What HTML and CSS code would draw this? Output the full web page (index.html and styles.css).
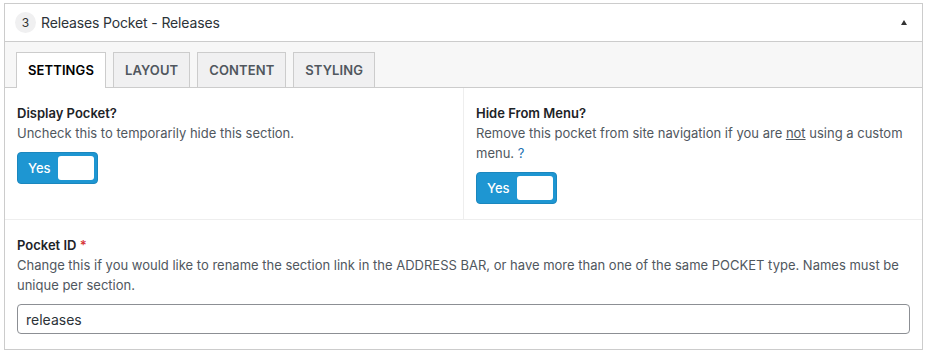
FILE: index.html
```html
<!DOCTYPE html>
<html lang="en">
<head>
    <meta charset="UTF-8">
    <meta name="viewport" content="width=device-width, initial-scale=1.0">
    <title>Releases Pocket</title>
    <link rel="stylesheet" href="styles.css">
</head>
<body>
    <div class="pocket">
        <div class="pocket-head">
            <span class="num">3</span>
            <span class="title">Releases Pocket - Releases</span>
            <span class="arrow"></span>
        </div>

        <div class="tabs">
            <div class="tab active">SETTINGS</div>
            <div class="tab">LAYOUT</div>
            <div class="tab">CONTENT</div>
            <div class="tab">STYLING</div>
        </div>

        <div class="row two">
            <div class="field">
                <div class="label">Display Pocket?</div>
                <div class="desc">Uncheck this to temporarily hide this section.</div>
                <div class="toggle"><span>Yes</span><i class="knob"></i></div>
            </div>
            <div class="field">
                <div class="label">Hide From Menu?</div>
                <div class="desc">Remove this pocket from site navigation if you are <u>not</u> using a custom menu. <a href="#">?</a></div>
                <div class="toggle"><span>Yes</span><i class="knob"></i></div>
            </div>
        </div>

        <div class="row">
            <div class="field">
                <div class="label">Pocket ID <span class="req">*</span></div>
                <div class="desc">Change this if you would like to rename the section link in the ADDRESS BAR, or have more than one of the same POCKET type. Names must be unique per section.</div>
                <input class="text-input" type="text" value="releases">
            </div>
        </div>
    </div>
</body>
</html>
```

FILE: styles.css
```css
body {
    margin: 0;
    padding: 3px 5px 0 4px;
    background: #fff;
    font-family: Inter, "Liberation Sans", sans-serif;
    font-size: 13px;
    color: #1d2327;
}

.pocket {
    border: 1px solid #ccc;
}

.pocket-head {
    display: flex;
    align-items: center;
    height: 37px;
    padding: 0 15px 0 10px;
    border-bottom: 1px solid #ccc;
}

.num {
    width: 21px;
    height: 21px;
    border-radius: 50%;
    background: #f0f0f1;
    font-size: 12px;
    line-height: 21px;
    text-align: center;
    color: #333;
}

.title {
    flex: 1;
    margin-left: 5px;
    font-size: 14px;
    letter-spacing: -0.15px;
    color: #2c3338;
}

/* small caret up */
.arrow {
    width: 0;
    height: 0;
    border-left: 3px solid transparent;
    border-right: 3px solid transparent;
    border-bottom: 5px solid #333;
}

.tabs {
    display: flex;
    gap: 7px;
    height: 46px;
    padding: 10px 0 0 11px;
    box-sizing: border-box;
    background: #f7f7f7;
    border-bottom: 1px solid #ccc;
}

.tab {
    height: 35px;
    padding: 0 11px;
    box-sizing: border-box;
    border: 1px solid #ccc;
    border-bottom: none;
    background: #f0f0f1;
    font-size: 13px;
    font-weight: 600;
    letter-spacing: 0.1px;
    line-height: 35px;
    color: #50575e;
}

.tab.active {
    height: 36px;
    background: #fff;
    color: #000;
}

.row {
    border-bottom: 1px solid #eee;
}

.row:last-child {
    border-bottom: none;
}

.row.two {
    display: flex;
}

.row.two .field {
    flex: 1;
}

.row.two .field:first-child {
    border-right: 1px solid #eee;
}

.field {
    padding: 16px 12px 15px 12px;
}

.label {
    font-weight: 600;
    line-height: 18px;
}

.req {
    color: #d63638;
}

.desc {
    margin-top: 1px;
    line-height: 20px;
    color: #50575e;
}

.desc a {
    color: #2271b1;
    text-decoration: none;
}

.toggle {
    display: flex;
    align-items: center;
    width: 81px;
    height: 32px;
    margin-top: 9px;
    padding: 3px;
    box-sizing: border-box;
    background: #1e96d2;
    border: 1px solid #1b87be;
    border-radius: 4px;
}

.toggle span {
    width: 37px;
    padding-left: 7px;
    box-sizing: border-box;
    color: #fff;
    font-size: 13px;
    font-weight: 500;
}

.knob {
    width: 36px;
    height: 24px;
    background: #fff;
    border-radius: 3px;
}

.text-input {
    display: block;
    width: 100%;
    height: 30px;
    margin-top: 9px;
    padding: 0 8px;
    box-sizing: border-box;
    border: 1px solid #8c8f94;
    border-radius: 4px;
    font-family: Inter, "Liberation Sans", sans-serif;
    font-size: 14px;
    color: #2c3338;
}
```
